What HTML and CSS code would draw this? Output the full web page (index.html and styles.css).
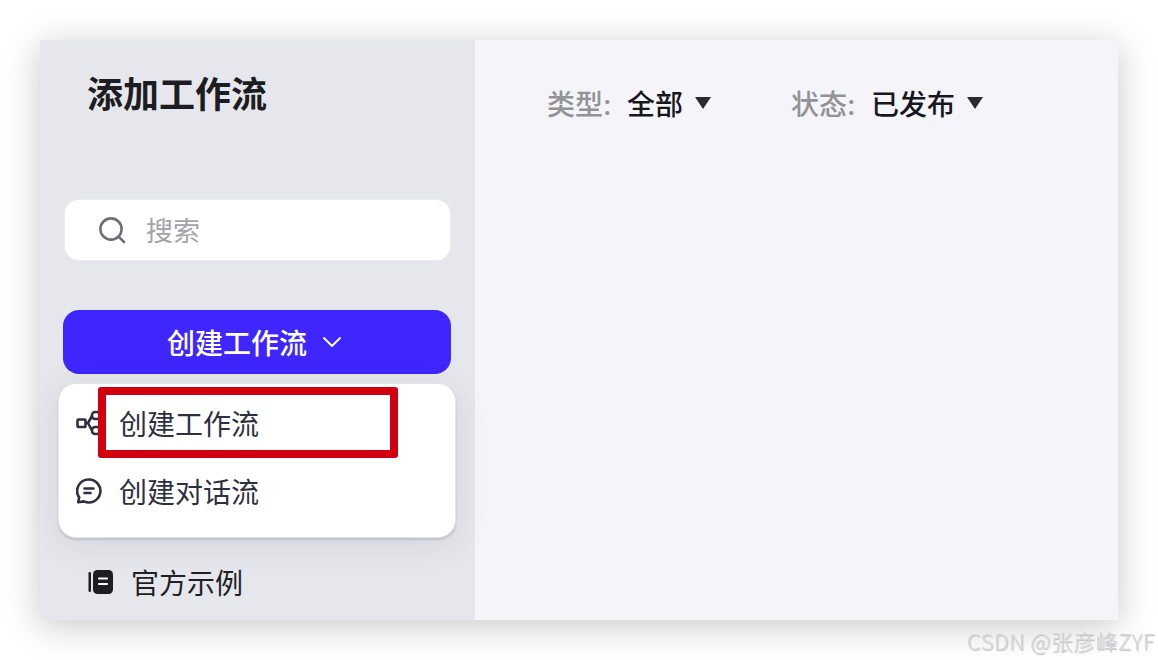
FILE: index.html
```html
<!DOCTYPE html>
<html lang="zh-CN">
<head>
<meta charset="utf-8">
<title>添加工作流</title>
<link rel="stylesheet" href="styles.css">
</head>
<body>
<div class="window">
  <aside class="sidebar">
    <h1 class="title">添加工作流</h1>
    <div class="search">
      <svg class="search-icon" viewBox="0 0 28 28" fill="none" stroke="#6f6f78" stroke-width="2.6" stroke-linecap="round"><circle cx="13" cy="13" r="10.6"/><path d="M20.8 20.8 26 26"/></svg>
      <span class="search-text">搜索</span>
    </div>
    <div class="create-wrap">
      <button class="create-btn">创建工作流
        <svg class="chevron" viewBox="0 0 20 12" fill="none" stroke="#fff" stroke-width="1.9" stroke-linecap="round" stroke-linejoin="round"><path d="M2 2l8 8 8-8"/></svg>
      </button>
      <div class="menu">
        <div class="menu-item">
          <svg class="menu-icon" viewBox="0 0 26 26" fill="none" stroke="#2d3040" stroke-width="2.6" stroke-linejoin="round"><rect x="1.500" y="9.500" width="8" height="7.500" rx="1"/><rect x="16" y="2" width="8" height="7" rx="3"/><rect x="16" y="17" width="8" height="7" rx="3"/><path d="M9.500 13h2.500l4-7M12 13l4 7.500"/></svg>
          <span>创建工作流</span>
        </div>
        <div class="menu-item">
          <svg class="menu-icon" viewBox="0 0 26 26" fill="none" stroke="#2d3040" stroke-width="2.600" stroke-linecap="round" stroke-linejoin="round"><path d="M13 1.500a11.500 11.500 0 1 1-5 21.900l-5.800.900 1-4.800A11.500 11.500 0 0 1 13 1.500z"/><path d="M8.500 10.500h9M8.500 15h6"/></svg>
          <span>创建对话流</span>
        </div>
        <div class="highlight"></div>
      </div>
    </div>
    <div class="nav-item">
      <svg class="nav-icon" viewBox="0 0 25 24"><rect x="0.500" y="2" width="2.500" height="20" rx="1.200" fill="#1d1d24"/><rect x="5" y="0" width="20" height="24" rx="4.500" fill="#1d1d24"/><path d="M11 8.500h8M11 14h8" stroke="#fff" stroke-width="2.200" stroke-linecap="round"/></svg>
      <span>官方示例</span>
    </div>
  </aside>
  <main class="content">
    <div class="filter">
      <span class="filter-label">类型:</span>
      <span class="filter-value">全部</span>
      <span class="caret"></span>
    </div>
    <div class="filter">
      <span class="filter-label">状态:</span>
      <span class="filter-value">已发布</span>
      <span class="caret"></span>
    </div>
  </main>
</div>
<div class="watermark">CSDN @张彦峰ZYF</div>
</body>
</html>
```
FILE: styles.css
```css
* { box-sizing: border-box; }
html, body { margin: 0; height: 100%; }
body {
  width: 1158px;
  height: 660px;
  padding: 40px;
  background: #fff;
  overflow: hidden;
  position: relative;
  font-family: Inter, "Noto Sans CJK SC", sans-serif;
}
.window {
  display: flex;
  width: 1078px;
  height: 580px;
  box-shadow: 0 6px 34px rgba(0, 0, 0, 0.22);
}
.sidebar {
  width: 435px;
  background: #e6e7ec;
  display: flex;
  flex-direction: column;
  padding: 0 24px;
}
.title {
  margin: 33px 0 0 23px;
  font-size: 36px;
  line-height: 44px;
  font-weight: 700;
  color: #1c1c22;
}
.search {
  margin: 83px 1px 0 1px;
  height: 60px;
  background: #fff;
  border-radius: 14px;
  box-shadow: 0 0 0 1px #eeeef2;
  display: flex;
  align-items: center;
  padding-left: 34px;
  gap: 20px;
}
.search-icon { width: 28px; height: 28px; flex: none; margin-left: -1px; }
.search-text { font-size: 27px; color: #a3a3a8; line-height: 60px; padding-top: 3px; }
.create-wrap { margin: 50px 0 0; position: relative; }
.create-btn {
  display: flex;
  align-items: center;
  justify-content: center;
  gap: 15px;
  width: 388px;
  margin-left: -1px;
  height: 64px;
  border: 0;
  border-radius: 16px;
  background: #3f26ff;
  color: #fff;
  font-family: inherit;
  font-size: 28px;
  font-weight: 500;
  padding: 0 5px 0 0;
}
.chevron { width: 20px; height: 12px; flex: none; }
.menu {
  position: absolute;
  left: -6px;
  top: 73px;
  width: 398px;
  height: 155px;
  background: #fff;
  border: 1px solid #e3e4ec;
  border-radius: 18px;
  box-shadow: 0 2px 2px rgba(150, 150, 165, 0.4), 0 6px 32px rgba(60, 60, 80, 0.1);
  padding: 5px 0 0 17px;
  z-index: 2;
}
.menu-item {
  display: flex;
  align-items: center;
  gap: 17px;
  height: 68px;
  font-size: 28px;
  color: #2d3040;
}
.menu-icon { width: 26px; height: 26px; flex: none; }
.highlight {
  position: absolute;
  left: 39px;
  top: 3px;
  width: 300px;
  height: 71px;
  border: 8px solid #d0000f;
  border-radius: 3px;
}
.nav-item {
  margin: 186px 0 0 24px;
  display: flex;
  align-items: center;
  gap: 18px;
  height: 44px;
  font-size: 28px;
  color: #1f1f26;
}
.nav-icon { width: 25px; height: 24px; flex: none; }
.content {
  flex: 1;
  background: #f4f4f9;
  display: flex;
  align-items: flex-start;
  gap: 80px;
  padding: 42px 0 0 72px;
}
.filter {
  display: flex;
  align-items: center;
  height: 42px;
  font-size: 28px;
}
.filter-label { color: #929297; font-weight: 500; width: 80px; }
.filter-value { color: #17171c; font-weight: 500; }
.caret {
  margin-left: 12px;
  width: 0;
  height: 0;
  border-left: 8px solid transparent;
  border-right: 8px solid transparent;
  border-top: 12px solid #2a2a35;
}
.watermark {
  position: absolute;
  right: 3px;
  top: 627px;
  font-family: "Noto Sans CJK SC", sans-serif;
  font-size: 22px;
  font-weight: 300;
  letter-spacing: 0.45px;
  line-height: 26px;
  color: #d8d8dc;
  text-shadow: 1px 1px 1px rgba(120, 120, 120, 0.45);
}
```
